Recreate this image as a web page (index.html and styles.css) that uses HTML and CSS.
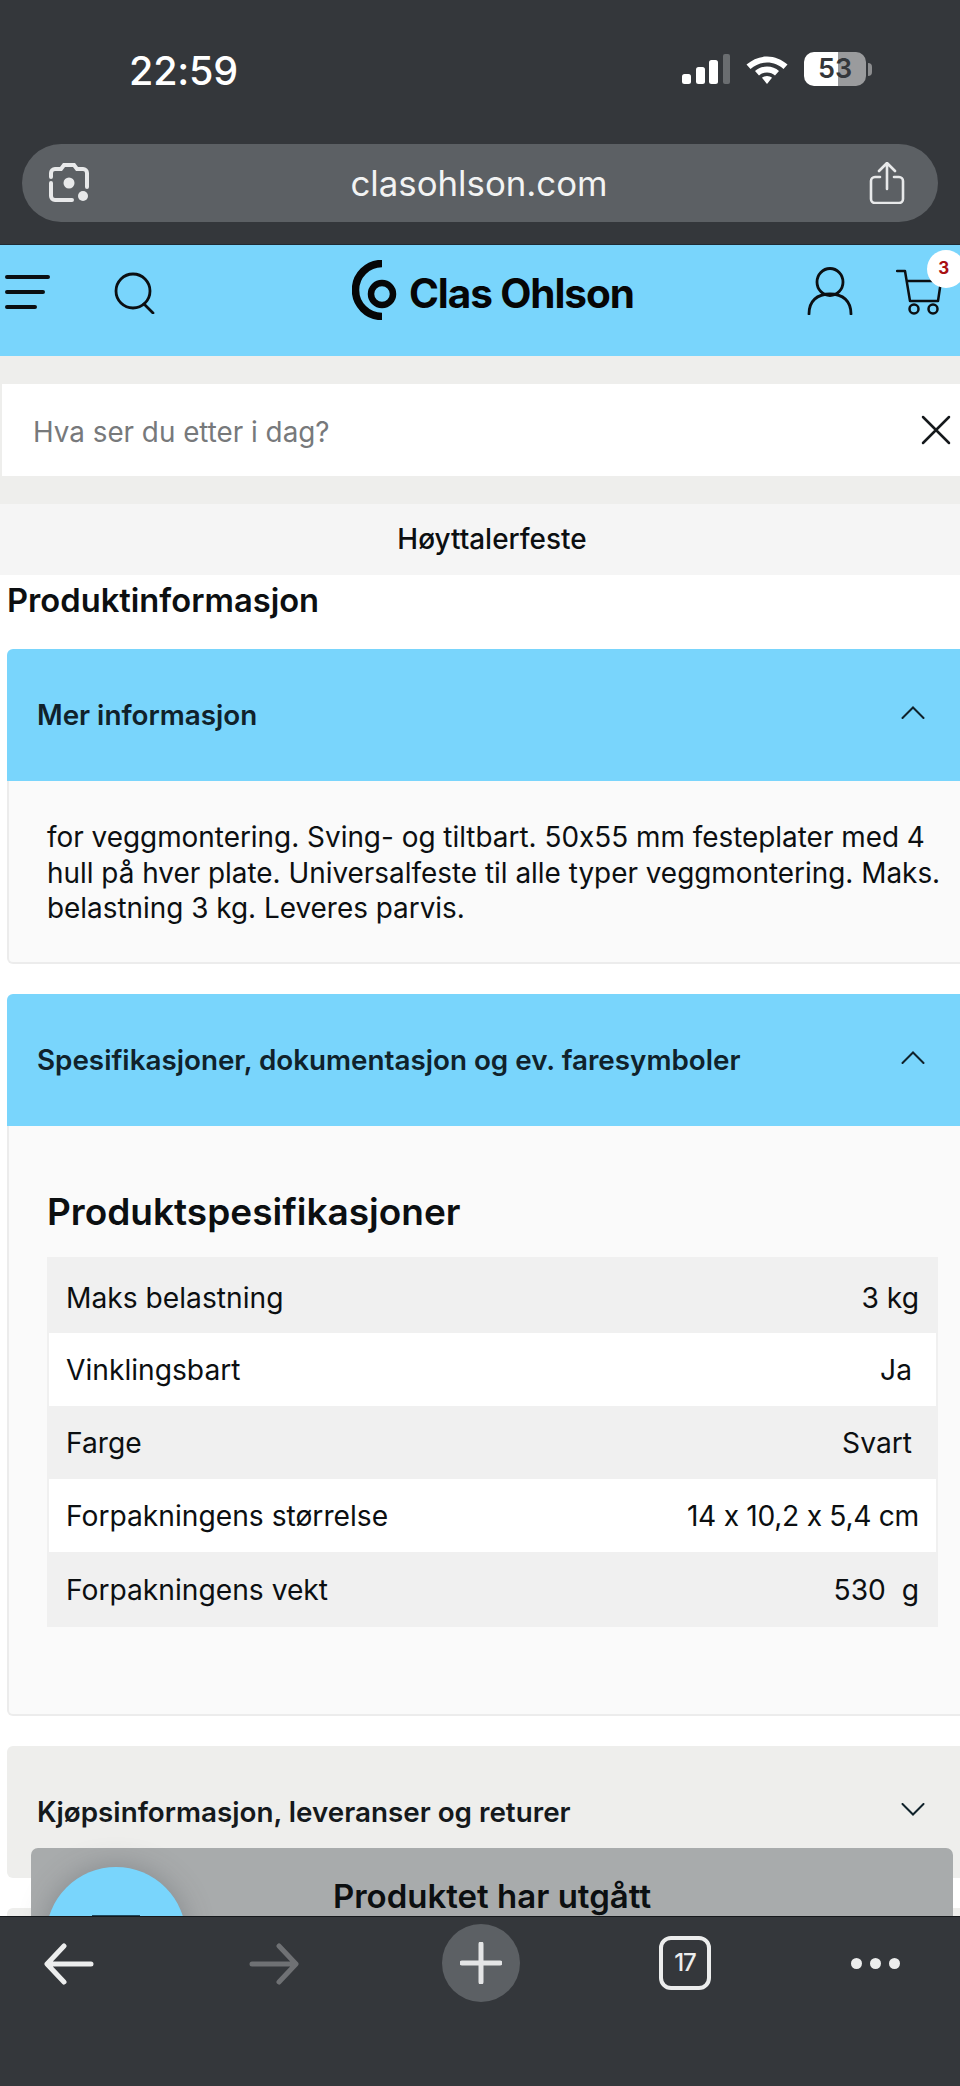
FILE: index.html
```html
<!DOCTYPE html>
<html lang="no">
<head>
<meta charset="utf-8">
<title>Clas Ohlson</title>
<link rel="stylesheet" href="styles.css">
</head>
<body>
<div class="phone">
  <div class="chrome-top">
    <div class="status">
      <span class="time">22:59</span>
      <div class="status-icons">
        <svg class="signal" width="48" height="30" viewBox="0 0 48 30"><rect x="0" y="20" width="9" height="10" rx="2.5" fill="#fff"/><rect x="14" y="13" width="9" height="17" rx="2.5" fill="#fff"/><rect x="27" y="6" width="9" height="24" rx="2.5" fill="#fff"/><rect x="41" y="0" width="7" height="30" rx="2" fill="#6a6d70"/></svg>
        <svg class="wifi" width="42" height="30" viewBox="0 0 42 30"><path d="M21 2.5C13 2.5 6.5 5.5 0.5 10.5l4 4.5C9 11 14.5 8.5 21 8.5s12 2.500 16.500 6.500l4-4.500C35.500 5.500 29 2.500 21 2.500z" fill="#fff"/><path d="M21 12.500c-4.800 0-8.800 1.700-12 4.500l4 4.500c2.200-1.900 4.800-3 8-3s5.800 1.100 8 3l4-4.500c-3.200-2.800-7.200-4.500-12-4.500z" fill="#fff"/><path d="M21 22c-2 0-3.700.7-5 1.800L21 30l5-6.200C24.700 22.700 23 22 21 22z" fill="#fff"/></svg>
        <div class="battery"><span class="battery-num">53</span></div>
        <span class="battery-tip"></span>
      </div>
    </div>
    <div class="urlbar">
      <svg width="40" height="40" viewBox="0 0 40 40" fill="none" stroke="#e8e9ea" stroke-width="4" stroke-linecap="round"><path d="M2 14V10a4 4 0 0 1 4-4h6l3-4h10l3 4h6a4 4 0 0 1 4 4v14"/><path d="M2 20v13a4 4 0 0 0 4 4h17"/><circle cx="20" cy="20" r="5.500" fill="#e8e9ea" stroke="none"/><circle cx="34" cy="33" r="5" fill="#e8e9ea" stroke="none"/></svg>
      <span class="url">clasohlson.com</span>
      <svg width="36" height="42" viewBox="0 0 36 42" fill="none" stroke="#e8e9ea" stroke-width="2.600" stroke-linecap="round" stroke-linejoin="round"><path d="M18 27V2M10 9l8-8 8 8"/><path d="M11 15H6a4 4 0 0 0-4 4v18a4 4 0 0 0 4 4h24a4 4 0 0 0 4-4V19a4 4 0 0 0-4-4h-5"/></svg>
    </div>
  </div>

  <div class="viewport">
    <header class="site-header">
      <svg class="ic-menu" width="45" height="34" viewBox="0 0 45 34" stroke="#0b0f12" stroke-width="4" stroke-linecap="round"><path d="M2 2h41M2 17h36M2 32h28"/></svg>
      <svg class="ic-search" width="42" height="42" viewBox="0 0 42 42" fill="none" stroke="#0b0f12" stroke-width="2.800" stroke-linecap="round"><circle cx="19" cy="19" r="17"/><path d="M30 32l9 9"/></svg>
      <div class="logo">
        <svg width="48" height="60" viewBox="0 0 48 60" fill="none" stroke="#060606"><path d="M30 3.500A26.500 26.500 0 0 0 30 56.500" stroke-width="7.500"/><circle cx="30" cy="34" r="11" stroke-width="6.500"/></svg>
        <span class="logo-text">Clas Ohlson</span>
      </div>
      <svg class="ic-user" width="46" height="48" viewBox="0 0 46 48" fill="none" stroke="#0b0f12" stroke-width="2.800" stroke-linecap="round"><ellipse cx="23" cy="15" rx="13" ry="13.500"/><path d="M2 47c0-13 8-20 21-20s21 7 21 20"/></svg>
      <div class="cart">
        <svg width="48" height="46" viewBox="0 0 48 46" fill="none" stroke="#0b0f12" stroke-width="2.500" stroke-linecap="round" stroke-linejoin="round"><path d="M1 2h8l5 30h28l3-20H11"/><circle cx="18" cy="40" r="4.500"/><circle cx="37" cy="40" r="4.500"/></svg>
        <span class="badge">3</span>
      </div>
    </header>

    <div class="search-strip">
      <div class="search-box">
        <span class="placeholder">Hva ser du etter i dag?</span>
        <svg width="30" height="30" viewBox="0 0 30 30" stroke="#15191c" stroke-width="2.500" stroke-linecap="round"><path d="M2 2l26 26M28 2L2 28"/></svg>
      </div>
    </div>
    <div class="crumb">Høyttalerfeste</div>

    <h2 class="section-title">Produktinformasjon</h2>

    <section class="acc">
      <div class="acc-head open">
        <span>Mer informasjon</span>
        <svg width="24" height="13" viewBox="0 0 24 13" fill="none" stroke="#10222b" stroke-width="2" stroke-linecap="round"><path d="M1.500 12L12 1.500 22.500 12"/></svg>
      </div>
      <div class="acc-body short">
        <p>for veggmontering. Sving- og tiltbart. 50x55 mm festeplater med 4 hull på hver plate. Universalfeste til alle typer veggmontering. Maks. belastning 3 kg. Leveres parvis.</p>
      </div>
    </section>

    <section class="acc">
      <div class="acc-head open">
        <span>Spesifikasjoner, dokumentasjon og ev. faresymboler</span>
        <svg width="24" height="13" viewBox="0 0 24 13" fill="none" stroke="#10222b" stroke-width="2" stroke-linecap="round"><path d="M1.500 12L12 1.500 22.500 12"/></svg>
      </div>
      <div class="acc-body tall">
        <h3 class="spec-title">Produktspesifikasjoner</h3>
        <div class="spec">
          <div class="row h76"><span>Maks belastning</span><span>3 kg</span></div>
          <div class="row alt inset"><span>Vinklingsbart</span><span>Ja</span></div>
          <div class="row inset"><span>Farge</span><span>Svart</span></div>
          <div class="row alt"><span>Forpakningens størrelse</span><span class="val">14 x 10,2 x 5,4 cm</span></div>
          <div class="row h75"><span>Forpakningens vekt</span><span class="pre">530  g</span></div>
        </div>
      </div>
    </section>

    <section class="acc">
      <div class="acc-head closed">
        <span>Kjøpsinformasjon, leveranser og returer</span>
        <svg width="24" height="13" viewBox="0 0 24 13" fill="none" stroke="#10222b" stroke-width="2" stroke-linecap="round"><path d="M1.500 1L12 11.500 22.500 1"/></svg>
      </div>
    </section>

    <section class="acc last"><div class="acc-head closed"></div></section>

    <aside class="popup">
      <div class="bubble"><span class="bubble-mark"></span></div>
      <div class="popup-title">Produktet har utgått</div>
    </aside>
  </div>

  <nav class="chrome-bottom">
    <svg width="50" height="42" viewBox="0 0 50 42" fill="none" stroke="#eceded" stroke-width="5" stroke-linecap="round" stroke-linejoin="round"><path d="M47 21H4M20 3L3 21l17 18"/></svg>
    <svg width="50" height="42" viewBox="0 0 50 42" fill="none" stroke="#6f7174" stroke-width="5" stroke-linecap="round" stroke-linejoin="round"><path d="M3 21h43M30 3l17 18-17 18"/></svg>
    <div class="plus"><svg width="42" height="42" viewBox="0 0 42 42" stroke="#e4e5e6" stroke-width="5" stroke-linecap="round"><path d="M21 2v38M2 21h38"/></svg></div>
    <div class="tabs">17</div>
    <div class="dots"><i></i><i></i><i></i></div>
  </nav>
</div>
</body>
</html>
```
FILE: styles.css
```css
* { box-sizing: border-box; }
html, body { margin: 0; padding: 0; background: #fff; }
body { font-family: Inter, "Noto Sans", sans-serif; color: #0c0f11; font-feature-settings: "calt" 0; }
.phone { width: 960px; height: 2086px; display: flex; flex-direction: column; overflow: hidden; }

.chrome-top { height: 245px; background: #34373b; border-bottom: 1px solid #1f2a33; color: #fff; flex: none; }
.status { height: 144px; display: flex; align-items: flex-start; justify-content: space-between; padding: 50px 89px 0 129px; }
.time { font-size: 39.500px; line-height: 42px; font-weight: 500; letter-spacing: -.2px; }
.status-icons { display: flex; align-items: center; height: 38px; margin-right: -1px; }
.signal { margin-right: 16px; }
.wifi { margin-right: 16px; }
.battery { width: 62px; height: 34px; border-radius: 10px; background: linear-gradient(90deg, #fff 0, #fff 55%, #9a9b9d 55%, #9a9b9d 100%); display: flex; align-items: center; justify-content: center; }
.battery-num { font-size: 27px; line-height: 30px; font-weight: 600; color: #34373b; }
.battery-tip { width: 4px; height: 13px; border-radius: 0 4px 4px 0; background: #8c8d8f; margin-left: 2px; }
.urlbar { margin: 0 22px; height: 78px; border-radius: 39px; background: #5c6064; display: flex; align-items: center; justify-content: space-between; padding: 0 33px 0 27px; }
.url { font-size: 34.800px; line-height: 40px; color: #f2f3f3; }

.viewport { position: relative; flex: 1; overflow: hidden; background: #fff; }
.site-header { height: 111px; background: #79d5fc; display: flex; align-items: flex-start; padding-left: 5px; }
.ic-menu { margin-top: 30px; }
.ic-search { margin: 27px 0 0 64px; }
.logo { display: flex; align-items: center; margin: 14px 0 0 197px; height: 62px; }
.logo svg { margin-left: -1px; }
.logo-text { font-size: 40.500px; line-height: 44px; font-weight: 700; letter-spacing: -1.100px; color: #060606; margin: 8px 0 0 9px; }
.ic-user { margin: 22px 0 0 173px; }
.cart { position: relative; margin: 24px 0 0 43px; }
.badge { position: absolute; left: 31px; top: -19px; width: 38px; height: 38px; border-radius: 50%; background: #fff; color: #a80f12; font-size: 17px; line-height: 36px; font-weight: 700; text-align: center; padding-right: 4px; }

.search-strip { height: 148px; background: #eeeeec; padding: 28px 0 28px 2px; }
.search-box { height: 92px; background: #fff; display: flex; align-items: center; justify-content: space-between; padding: 0 9px 0 31px; }
.placeholder { font-size: 27.800px; line-height: 34px; color: #77797b; margin-top: 3px; }
.crumb { height: 71px; background: #f5f5f5; text-align: center; font-size: 27.900px; line-height: 71px; font-weight: 500; padding-left: 24px; }
.section-title { margin: 0 0 24px; height: 50px; padding-left: 7px; font-size: 32.700px; line-height: 50px; font-weight: 600; }

.acc { margin: 0 -20px 30px 7px; }
.acc-head { height: 132px; display: flex; align-items: center; justify-content: space-between; padding: 0 55px 0 30px; border-radius: 6px 6px 0 0; font-size: 27.800px; font-weight: 600; color: #10222b; }
.acc-head svg { margin-top: -6px; }
.acc-head.open { background: #79d5fc; }
.acc-head.closed { background: #eeeeec; border-radius: 6px; color: #15191c; }
.acc-body { background: #fafafa; border: 2px solid #ececec; border-top: 0; border-radius: 0 0 6px 6px; padding-left: 38px; }
.acc-body.short { height: 183px; padding-top: 39px; }
.acc-body p { margin: 0; width: 905px; font-size: 27.900px; line-height: 35.500px; }
.acc-body.tall { height: 590px; padding-top: 64px; }
.spec-title { margin: 0 0 23px; font-size: 37px; line-height: 44px; font-weight: 600; }
.spec { width: 891px; background: #f0f0f0; }
.row { height: 73px; display: flex; align-items: center; justify-content: space-between; padding: 0 19px 0 19px; font-size: 28.200px; }
.row.h76 { height: 76px; padding-top: 5px; }
.row.h75 { height: 75px; }
.row.alt { background: #fff; margin: 0 2px; padding: 0 17px 0 17px; }
.row.inset { padding-right: 26px; }
.row.alt.inset { padding-right: 24px; }
.val { letter-spacing: -.3px; }
.pre { white-space: pre; }
.acc.last { margin-bottom: 0; }

.popup { position: absolute; left: 31px; top: 1603px; width: 922px; height: 320px; background: #a8abac; border-radius: 7px; }
.bubble { position: absolute; left: 15px; top: 19px; width: 140px; height: 140px; border-radius: 50%; background: #79d5fc; box-shadow: 0 0 28px rgba(70,75,80,.35); display: flex; justify-content: center; }
.bubble-mark { width: 48px; height: 30px; margin-top: 48px; background: #1f4a60; }
.popup-title { text-align: center; font-size: 33px; line-height: 40px; font-weight: 600; padding-top: 28px; }

.chrome-bottom { height: 170px; flex: none; background: #34373b; border-top: 1px solid #15181b; display: flex; align-items: flex-start; padding: 26px 0 0 44px; position: relative; }
.chrome-bottom > svg:nth-child(2) { margin-left: 155px; }
.plus { width: 78px; height: 78px; border-radius: 50%; background: #5c6064; display: flex; align-items: center; justify-content: center; margin: -19px 0 0 143px; }
.tabs { width: 52px; height: 54px; border: 4px solid #eceded; border-radius: 12px; color: #eceded; font-size: 24px; line-height: 46px; font-weight: 500; text-align: center; margin: -7px 0 0 139px; letter-spacing: -1px; }
.dots { display: flex; gap: 8px; margin: 15px 0 0 140px; }
.dots i { width: 11px; height: 11px; border-radius: 50%; background: #eceded; display: block; }
```
